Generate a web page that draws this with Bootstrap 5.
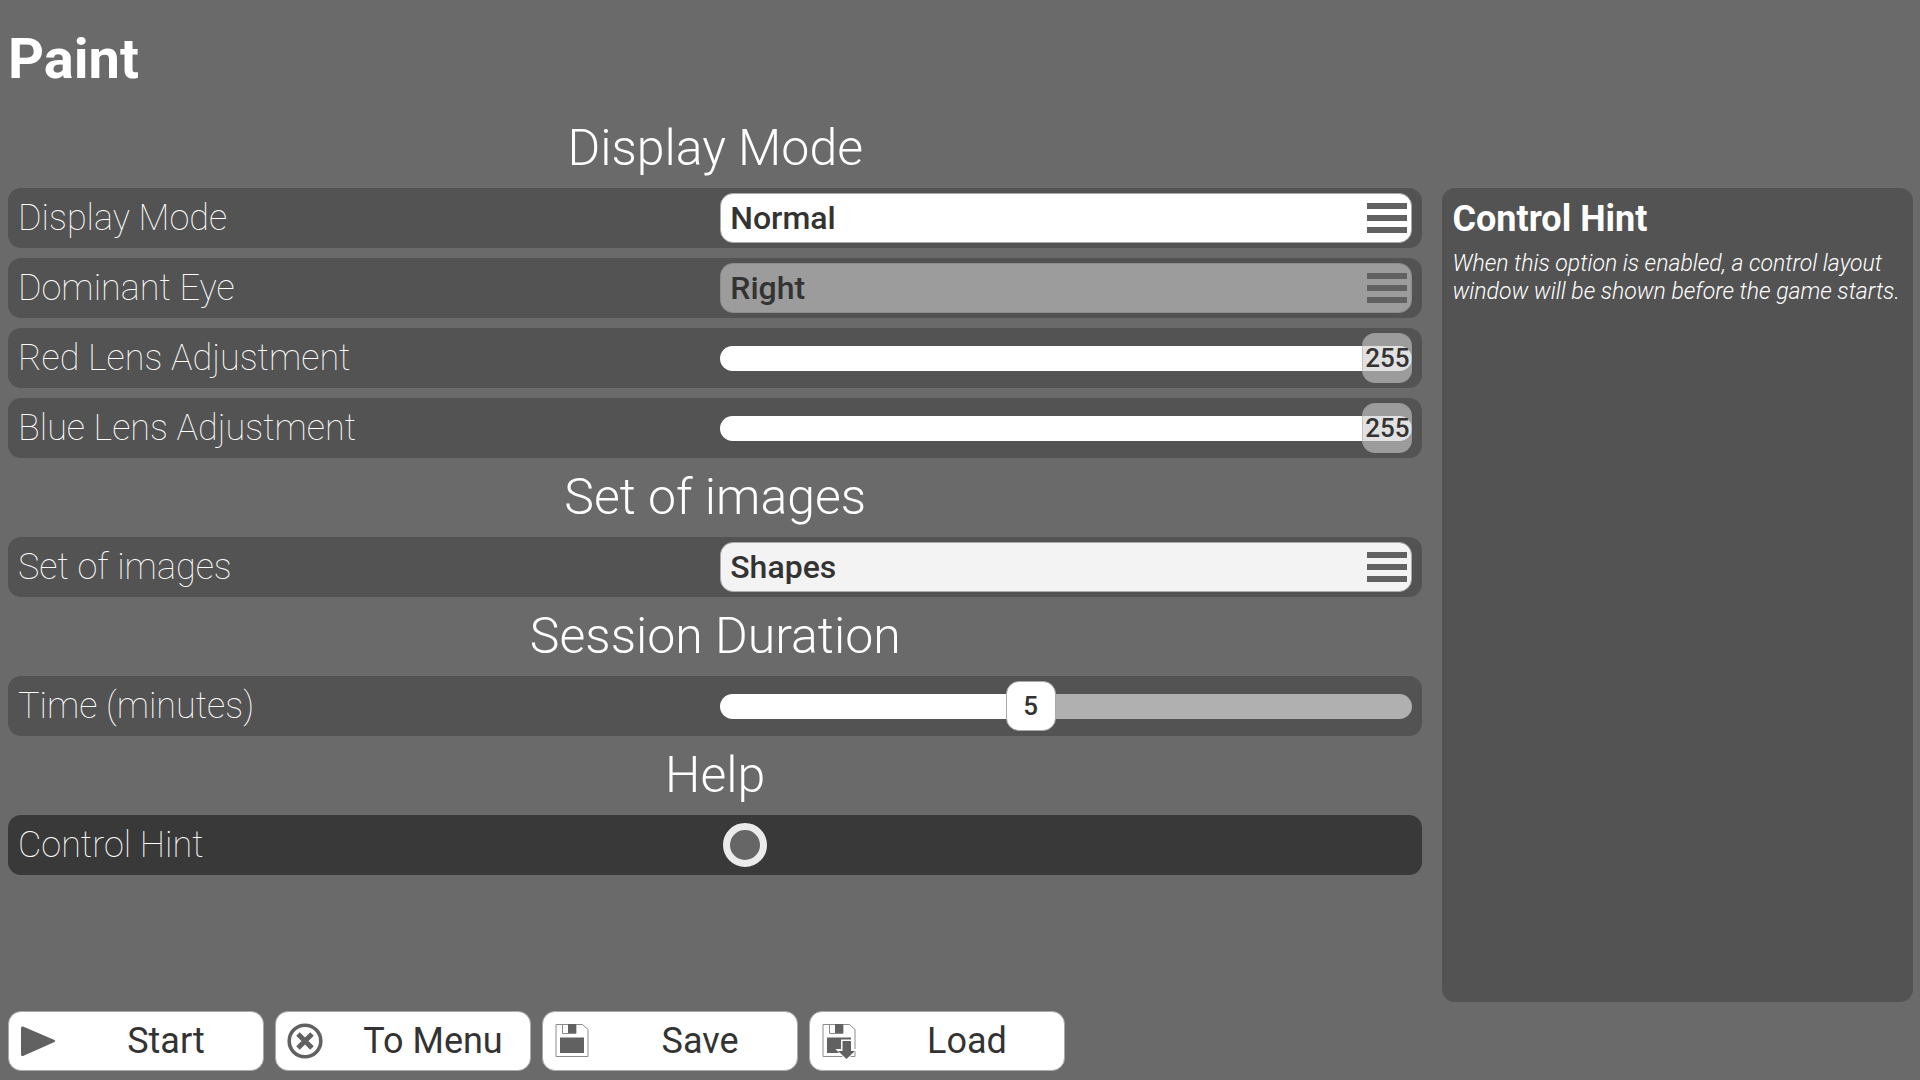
<!DOCTYPE html>
<html lang="en">
<head>
<meta charset="utf-8">
<meta name="viewport" content="width=device-width, initial-scale=1">
<title>Paint</title>
<link href="https://cdn.jsdelivr.net/npm/bootstrap@5.3.0/dist/css/bootstrap.min.css" rel="stylesheet">
<style>
  body {
    background: #6a6a6a;
    color: #fff;
    font-family: Roboto, "Liberation Sans", sans-serif;
  }
  .screen { padding: 0 7px 9px 8px; gap: 9px; }
  .game-title { font-size: 56px; font-weight: 700; line-height: 119px; }
  .columns { gap: 20px; }
  .options { display: flex; flex-direction: column; gap: 10px; }
  .section-title { font-size: 50px; font-weight: 300; line-height: 59px; text-align: center; margin: 0; }
  .option { background: #535353; border-radius: 13px; padding: 5px 10px; gap: 10px; height: 60px; }
  .option.selected { background: #393939; }
  .option > * { flex: 1 1 0; min-width: 0; }
  .option-label { font-size: 36px; font-weight: 100; line-height: 50px; white-space: nowrap; }

  .picker { position: relative; height: 50px; }
  .picker select {
    appearance: none;
    display: block;
    width: 100%;
    height: 50px;
    padding: 0 60px 0 9px;
    border: 1px solid #aaa;
    border-radius: 13px;
    background: #fff;
    color: #333;
    font-size: 32px;
    font-weight: 500;
    line-height: 46px;
    opacity: 1;
  }
  .picker select.tinted { background: #f3f3f3; }
  .picker select:disabled { background: #9c9c9c; border-color: #8c8c8c; }
  .picker svg { position: absolute; right: 5px; top: 10px; pointer-events: none; }

  .slider { position: relative; height: 50px; }
  .slider input {
    appearance: none;
    display: block;
    width: 100%;
    height: 50px;
    margin: 0;
    background: transparent;
  }
  .slider input::-webkit-slider-runnable-track {
    height: 25px;
    border-radius: 13px;
    background: linear-gradient(to right, #fff calc(25px + (100% - 50px) * var(--pos)), #b0b0b0 0);
  }
  .slider.full input::-webkit-slider-runnable-track { background: #fff; }
  .slider input::-webkit-slider-thumb {
    appearance: none;
    width: 50px;
    height: 50px;
    margin-top: -13px;
    border: 1px solid #aaa;
    border-radius: 13px;
    background: #fff;
  }
  .slider input:disabled::-webkit-slider-thumb { background: rgba(205, 205, 205, .6); border-color: rgba(150, 150, 150, .4); }
  .slider output {
    position: absolute;
    top: 0;
    left: calc((100% - 50px) * var(--pos));
    width: 50px;
    padding: 0;
    color: #333;
    font-size: 26px;
    font-weight: 500;
    line-height: 50px;
    text-align: center;
    pointer-events: none;
  }
  .toggle input {
    appearance: none;
    display: block;
    width: 44px;
    height: 44px;
    margin: 3px;
    border: 7px solid #ebebeb;
    border-radius: 50%;
    background: #666;
  }

  .hint { flex: 0 0 24.7%; margin-top: 69px; padding: 10px; border-radius: 13px; background: #535353; }
  .hint h2 { font-size: 36px; font-weight: 700; line-height: 42px; margin: 0 0 10px; }
  .hint p { font-size: 23px; font-weight: 300; font-style: italic; line-height: 28px; margin: 0; }

  .actions { gap: 11px; }
  .action {
    display: flex;
    align-items: center;
    width: 256px;
    height: 60px;
    padding: 0;
    border: 1px solid #aaa;
    border-radius: 13px;
    background: #fff;
    color: #333;
    font-size: 36px;
    font-weight: 400;
    line-height: 58px;
  }
  .action svg { flex: none; margin: 0 13px 0 11px; }
  .action span { flex: 1; }
</style>
</head>
<body>
<div class="screen d-flex flex-column min-vh-100">
  <main class="d-flex flex-column flex-grow-1">
    <h1 class="game-title m-0">Paint</h1>
    <div class="columns d-flex flex-grow-1">
      <form class="options flex-grow-1">
        <h2 class="section-title">Display Mode</h2>
        <div class="option d-flex">
          <label class="option-label" for="mode">Display Mode</label>
          <div class="picker">
            <select id="mode"><option>Normal</option></select>
            <svg width="40" height="30" fill="#616161"><path d="M0 0h40v6H0zM0 12h40v6H0zM0 24h40v6H0z"/></svg>
          </div>
        </div>
        <div class="option d-flex">
          <label class="option-label" for="eye">Dominant Eye</label>
          <div class="picker">
            <select id="eye" disabled><option>Right</option></select>
            <svg width="40" height="30" fill="#616161"><path d="M0 0h40v6H0zM0 12h40v6H0zM0 24h40v6H0z"/></svg>
          </div>
        </div>
        <div class="option d-flex">
          <label class="option-label" for="red">Red Lens Adjustment</label>
          <div class="slider full" style="--pos: 1">
            <input id="red" type="range" min="0" max="255" value="255" disabled>
            <output for="red">255</output>
          </div>
        </div>
        <div class="option d-flex">
          <label class="option-label" for="blue">Blue Lens Adjustment</label>
          <div class="slider full" style="--pos: 1">
            <input id="blue" type="range" min="0" max="255" value="255" disabled>
            <output for="blue">255</output>
          </div>
        </div>
        <h2 class="section-title">Set of images</h2>
        <div class="option d-flex">
          <label class="option-label" for="images">Set of images</label>
          <div class="picker">
            <select id="images" class="tinted"><option>Shapes</option></select>
            <svg width="40" height="30" fill="#616161"><path d="M0 0h40v6H0zM0 12h40v6H0zM0 24h40v6H0z"/></svg>
          </div>
        </div>
        <h2 class="section-title">Session Duration</h2>
        <div class="option d-flex">
          <label class="option-label" for="time">Time (minutes)</label>
          <div class="slider" style="--pos: 0.4444">
            <input id="time" type="range" min="1" max="10" value="5">
            <output for="time">5</output>
          </div>
        </div>
        <h2 class="section-title">Help</h2>
        <div class="option selected d-flex">
          <label class="option-label" for="controls">Control Hint</label>
          <div class="toggle"><input id="controls" type="checkbox"></div>
        </div>
      </form>
      <aside class="hint">
        <h2>Control Hint</h2>
        <p>When this option is enabled, a control layout window will be shown before the game starts.</p>
      </aside>
    </div>
  </main>
  <footer class="actions d-flex flex-wrap">
    <button class="action" type="button">
      <svg width="36" height="36" viewBox="0 0 36 36"><path d="M3 3.500L34.500 17Q36 18 34.500 19L3 33Q1 33.500 1 31.500V5Q1 3 3 3.500Z" fill="#616161"/></svg>
      <span>Start</span>
    </button>
    <button class="action" type="button">
      <svg width="36" height="36" viewBox="0 0 36 36" fill="none" stroke="#616161"><circle cx="18" cy="18" r="15.800" stroke-width="3.600"/><path d="M11 11L25 25M25 11L11 25" stroke-width="5"/></svg>
      <span>To Menu</span>
    </button>
    <button class="action" type="button">
      <svg width="36" height="36" viewBox="0 0 36 36"><path d="M2 1.500H28.500L34 6.500V33.500H2Z" fill="#fff" stroke="#8c8c8c"/><path d="M8.500 2V10.500H22V2" fill="none" stroke="#8c8c8c"/><path d="M14 1h8v9h-8zM6 14.500h24v15.500H6z" fill="#616161"/></svg>
      <span>Save</span>
    </button>
    <button class="action" type="button">
      <svg width="36" height="36" viewBox="0 0 36 36"><path d="M2 1.500H28.500L34 6.500V33.500H2Z" fill="#fff" stroke="#8c8c8c"/><path d="M8.500 2V10.500H22V2" fill="none" stroke="#8c8c8c"/><path d="M14 1h8v9h-8zM6 14.500h24v15.500H6z" fill="#616161"/><path d="M20 16.500h11.500v9.500h5L25.500 38L14.500 26h5.500z" fill="#fff"/><path d="M21.500 18h8.500v10h4L25.500 36L17 28h4.500z" fill="#616161"/></svg>
      <span>Load</span>
    </button>
  </footer>
</div>
<script src="https://cdn.jsdelivr.net/npm/bootstrap@5.3.0/dist/js/bootstrap.bundle.min.js"></script>
</body>
</html>
